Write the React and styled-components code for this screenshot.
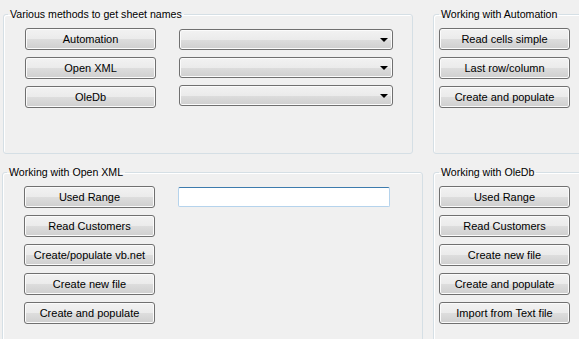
import React from "react";
import styled, { createGlobalStyle } from "styled-components";

const GlobalStyle = createGlobalStyle`
	html, body {
		margin: 0;
		padding: 0;
		background: #f0f0f0;
		overflow: hidden;
	}
	body {
		font-family: "Liberation Sans", Arial, sans-serif;
		font-size: 11px;
		color: #000;
	}
`;

function App() {
	return (
		<>
			<GlobalStyle />
			<StForm>
				<StRow $top={8} $left={3} $gap={20}>
					<StGroup $width={410} $height={146}>
						<StLegend>Various methods to get sheet names</StLegend>
						<StSplit>
							<StColumn>
								<StButton>Automation</StButton>
								<StButton>Open XML</StButton>
								<StButton>OleDb</StButton>
							</StColumn>
							<StComboColumn>
								<StCombo>
									<StArrow />
								</StCombo>
								<StCombo>
									<StArrow />
								</StCombo>
								<StCombo>
									<StArrow />
								</StCombo>
							</StComboColumn>
						</StSplit>
					</StGroup>
					<StGroup $width={160} $height={146} $side>
						<StLegend $side>Working with Automation</StLegend>
						<StColumn>
							<StButton>Read cells simple</StButton>
							<StButton>Last row/column</StButton>
							<StButton>Create and populate</StButton>
						</StColumn>
					</StGroup>
				</StRow>
				<StRow $top={12} $left={2} $gap={10}>
					<StGroup $width={421} $height={200}>
						<StLegend>Working with Open XML</StLegend>
						<StSplit>
							<StColumn>
								<StButton>Used Range</StButton>
								<StButton>Read Customers</StButton>
								<StButton>Create/populate vb.net</StButton>
								<StButton>Create new file</StButton>
								<StButton>Create and populate</StButton>
							</StColumn>
							<StTextBox type='text' />
						</StSplit>
					</StGroup>
					<StGroup $width={160} $height={200} $side>
						<StLegend $side>Working with OleDb</StLegend>
						<StColumn>
							<StButton>Used Range</StButton>
							<StButton>Read Customers</StButton>
							<StButton>Create new file</StButton>
							<StButton>Create and populate</StButton>
							<StButton>Import from Text file</StButton>
						</StColumn>
					</StGroup>
				</StRow>
			</StForm>
		</>
	);
}

export default App;

const StForm = styled.div`
	display: flex;
	flex-direction: column;
	width: 579px;
	height: 339px;
	overflow: hidden;
`;

const StRow = styled.div`
	display: flex;
	gap: ${(p) => p.$gap}px;
	padding-top: ${(p) => p.$top}px;
	padding-left: ${(p) => p.$left}px;
	flex-shrink: 0;
`;

const StGroup = styled.fieldset`
	box-sizing: border-box;
	flex-shrink: 0;
	width: ${(p) => p.$width}px;
	height: ${(p) => p.$height}px;
	margin: 0;
	padding: 0 0 0 ${(p) => (p.$side ? 5 : 21)}px;
	border: 1px solid #d5dfe5;
	border-radius: 3px;
	box-shadow: inset 1px 1px 0 #ffffff;
	min-width: 0;
`;

// the legend sits where the padding starts, so pull the wide groups' titles back
const StLegend = styled.legend`
	margin-left: ${(p) => (p.$side ? 0 : -17)}px;
	padding: 0 2px;
	line-height: 13px;
	font-size: 10.6px;
	white-space: nowrap;
`;

const StSplit = styled.div`
	display: flex;
	align-items: flex-start;
	gap: 23px;
`;

const StColumn = styled.div`
	display: flex;
	flex-direction: column;
	gap: 7px;
	padding-top: 7px;
`;

const StComboColumn = styled.div`
	display: flex;
	flex-direction: column;
	gap: 7px;
	padding-top: 8px;
`;

const StButton = styled.button`
	box-sizing: border-box;
	width: 131px;
	height: 22px;
	padding: 0;
	border: 1px solid #707070;
	border-radius: 3px;
	background: linear-gradient(#f2f2f2 0%, #ebebeb 50%, #dddddd 51%, #cfcfcf 100%);
	box-shadow: inset 0 0 0 1px #fbfbfb;
	font-family: "Liberation Sans", Arial, sans-serif;
	font-size: 11px;
	color: #000;
	text-align: center;
`;

const StCombo = styled.div`
	box-sizing: border-box;
	display: flex;
	align-items: center;
	justify-content: flex-end;
	padding-right: 4px;
	width: 214px;
	height: 21px;
	border: 1px solid #707070;
	border-radius: 3px;
	background: linear-gradient(#f2f2f2 0%, #ebebeb 50%, #dddddd 51%, #cfcfcf 100%);
	box-shadow: inset 0 0 0 1px #fbfbfb;
`;

const StArrow = styled.span`
	width: 0;
	height: 0;
	border-left: 4px solid transparent;
	border-right: 4px solid transparent;
	border-top: 4px solid #000;
	margin-top: 1px;
`;

const StTextBox = styled.input`
	box-sizing: border-box;
	width: 212px;
	height: 20px;
	margin-top: 8px;
	padding: 0 3px;
	border: 1px solid #b5d3ec;
	border-top-color: #3d7bad;
	border-radius: 2px;
	background: #fff;
	outline: none;
	font-family: "Liberation Sans", Arial, sans-serif;
	font-size: 11px;
`;
